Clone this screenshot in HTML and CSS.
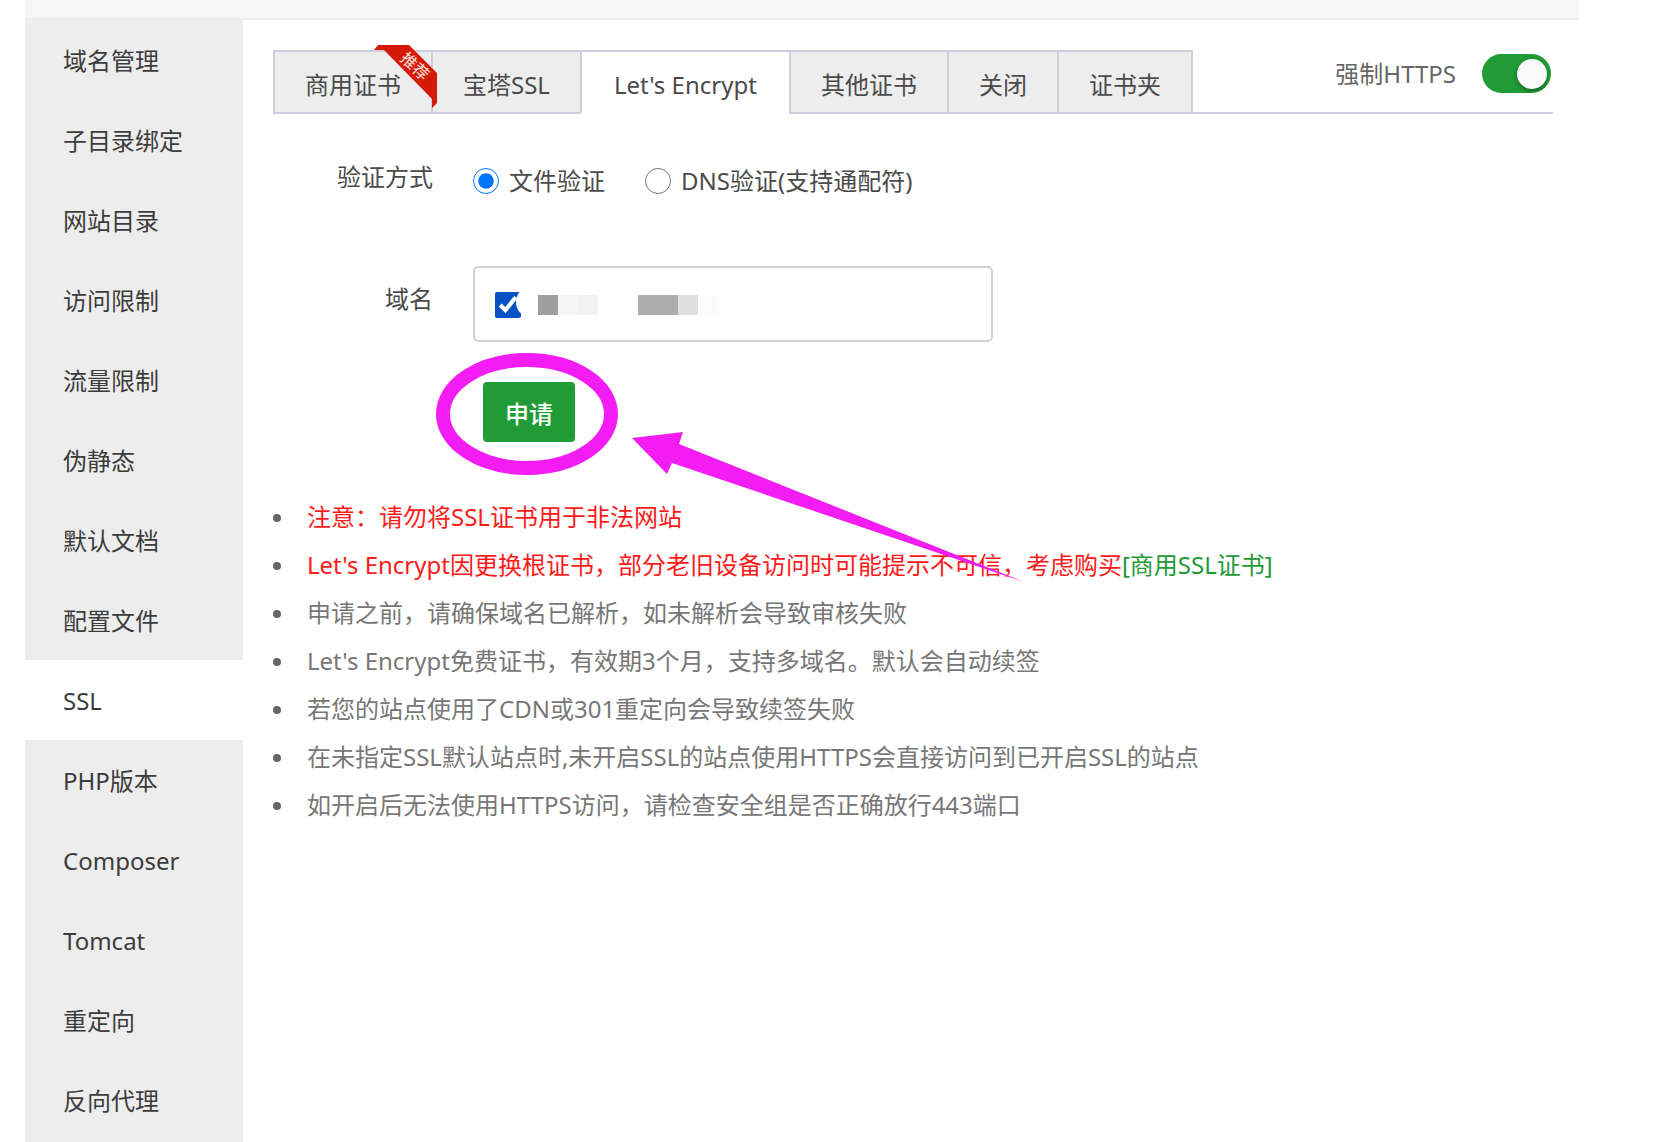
FILE: index.html
```html
<!DOCTYPE html>
<html lang="zh-CN">
<head>
<meta charset="utf-8">
<meta name="viewport" content="width=device-width, initial-scale=1">
<title>SSL</title>
<link rel="stylesheet" href="styles.css">
</head>
<body>
<div class="dialog">
  <header class="dialog-head"></header>
  <div class="dialog-body">
    <nav class="side">
      <a href="#">域名管理</a>
      <a href="#">子目录绑定</a>
      <a href="#">网站目录</a>
      <a href="#">访问限制</a>
      <a href="#">流量限制</a>
      <a href="#">伪静态</a>
      <a href="#">默认文档</a>
      <a href="#">配置文件</a>
      <a href="#" class="on" aria-current="page">SSL</a>
      <a href="#">PHP版本</a>
      <a href="#">Composer</a>
      <a href="#">Tomcat</a>
      <a href="#">重定向</a>
      <a href="#">反向代理</a>
    </nav>
    <main class="main">
      <div class="tab-row">
        <div class="tabs" role="tablist">
          <button class="tab" role="tab" type="button">商用证书
            <svg class="ribbon" width="64" height="65" viewBox="0 0 64 65">
              <path d="M1 6L5 1H36L64 29V59L59 64V55L11 6Z" fill="#d51a0a"/>
              <text x="42" y="22" transform="rotate(43 42 22)" text-anchor="middle" dominant-baseline="central">推荐</text>
            </svg>
          </button>
          <button class="tab" role="tab" type="button">宝塔SSL</button>
          <button class="tab active" role="tab" type="button" aria-selected="true">Let's Encrypt</button>
          <button class="tab" role="tab" type="button">其他证书</button>
          <button class="tab" role="tab" type="button">关闭</button>
          <button class="tab" role="tab" type="button">证书夹</button>
        </div>
        <label class="force">强制HTTPS<input class="switch" type="checkbox" role="switch" checked></label>
      </div>

      <form class="form">
        <div class="field" role="radiogroup" aria-labelledby="verify">
          <span class="field-name" id="verify">验证方式</span>
          <div class="options">
            <label class="option"><input type="radio" name="verify" checked>文件验证</label>
            <label class="option"><input type="radio" name="verify">DNS验证(支持通配符)</label>
          </div>
        </div>
        <div class="field domain">
          <label class="field-name" for="domain">域名</label>
          <div class="domain-box">
            <span class="check"><input type="checkbox" id="domain" checked></span>
            <span class="mosaic"><i class="m1"></i><i class="m2"></i><i class="m3"></i></span>
            <span class="mosaic"><i class="m4"></i><i class="m4"></i><i class="m5"></i><i class="m6"></i></span>
          </div>
        </div>
        <div class="action">
          <button class="apply" type="button">申请</button>
          <svg class="mark" width="590" height="234" viewBox="0 0 590 234">
            <ellipse cx="92" cy="63" rx="84" ry="54" fill="none" stroke="#f31df3" stroke-width="14"/>
            <path d="M197 87L248 81L244 93L589 231L237 112L232 123Z" fill="#f31df3"/>
          </svg>
        </div>
      </form>

      <ul class="notes">
        <li class="warn">注意：请勿将SSL证书用于非法网站</li>
        <li class="warn">Let's Encrypt因更换根证书，部分老旧设备访问时可能提示不可信，考虑购买<a href="#">[商用SSL证书]</a></li>
        <li>申请之前，请确保域名已解析，如未解析会导致审核失败</li>
        <li>Let's Encrypt免费证书，有效期3个月，支持多域名。默认会自动续签</li>
        <li>若您的站点使用了CDN或301重定向会导致续签失败</li>
        <li>在未指定SSL默认站点时,未开启SSL的站点使用HTTPS会直接访问到已开启SSL的站点</li>
        <li>如开启后无法使用HTTPS访问，请检查安全组是否正确放行443端口</li>
      </ul>
    </main>
  </div>
</div>
</body>
</html>
```
FILE: styles.css
```css
* { box-sizing: border-box; }

body {
  margin: 0;
  background: #fff;
  color: #4a4a4a;
  font: 24px/32px "Noto Sans", "Noto Sans CJK SC", sans-serif;
}

button, input { font: inherit; color: inherit; margin: 0; }
a { text-decoration: none; color: inherit; }

.dialog { margin: 0 95px 0 25px; }

.dialog-head {
  height: 20px;
  background: #f6f6f6;
  border-bottom: 2px solid #ededed;
}

.dialog-body { display: flex; min-height: calc(100vh - 20px); }

/* side menu */
.side { flex: none; width: 218px; background: #ededed; }
.side a {
  display: block;
  height: 80px;
  padding-left: 38px;
  line-height: 82px;
  color: #3c3c3c;
}
.side .on { background: #fff; }

.main { flex: 1; min-width: 0; padding: 30px 26px 0 30px; }

/* tabs */
.tab-row {
  display: flex;
  justify-content: space-between;
  height: 64px;
  border-bottom: 2px solid #d0cede;
}
.tabs { display: flex; height: 64px; border-right: 2px solid #d0cede; }
.tab {
  position: relative;
  padding: 6px 30px 0;
  border: solid #d0cede;
  border-width: 2px 0 2px 2px;
  background: #ededed;
  white-space: nowrap;
}
.tab.active { padding: 6px 32px 0; background: #fff; border-bottom-color: #fff; }

.ribbon { position: absolute; z-index: 1; top: -8px; right: -6px; }
.ribbon text { font-size: 16px; fill: #ffe3df; }

.force { display: flex; align-items: center; gap: 26px; height: 48px; padding-right: 2px; color: #666; }
.switch {
  appearance: none;
  width: 69px;
  height: 39px;
  margin-bottom: 2px;
  padding: 5px 4px;
  border-radius: 20px;
  background: #209b35;
}
.switch::before {
  content: "";
  display: block;
  width: 30px;
  height: 30px;
  margin-left: auto;
  border-radius: 50%;
  background: #fafafa;
  box-shadow: 0 2px 4px rgba(0, 0, 0, .35);
}

/* form */
.form { padding-top: 47px; }
.field { display: flex; gap: 40px; }
.field-name { flex: none; width: 160px; text-align: right; }
.options { display: flex; gap: 40px; padding-top: 4px; }
.option { display: flex; align-items: center; gap: 10px; }
.option input { width: 26px; height: 26px; }

.domain { margin-top: 69px; }
.domain .field-name { padding-top: 17px; }
.domain-box {
  display: flex;
  align-items: center;
  width: 520px;
  height: 76px;
  padding: 2px 0 0 20px;
  border: 2px solid #d2d2d2;
  border-radius: 5px;
}
.check { position: relative; display: flex; margin-right: 17px; }
.check input { width: 26px; height: 26px; accent-color: #0652c4; }
/* rounded nibble out of the right side of the tick box */
.check::after {
  content: "";
  position: absolute;
  left: 21px;
  top: -4px;
  width: 24px;
  height: 28px;
  border-radius: 50%;
  background: #fff;
}
.mosaic { position: relative; display: flex; margin-right: 40px; }
.mosaic i { width: 20px; height: 20px; }
.m1 { background: #9f9f9f; }
.m2 { background: #f5f5f5; }
.m3 { background: #f1f1f1; }
.m4 { background: #adadad; }
.m5 { background: #e0e0e0; }
.m6 { background: #fbfbfb; }

.action { position: relative; margin: 40px 0 0 210px; }
.apply {
  display: block;
  width: 92px;
  height: 60px;
  padding: 4px 0 0;
  border: 0;
  border-radius: 4px;
  background: #209b35;
  color: #fff;
  font-weight: 500;
}
.mark { position: absolute; left: -48px; top: -31px; pointer-events: none; }

/* notes */
.notes { margin: 51px 0 0; padding: 0; list-style: none; line-height: 48px; color: #777; }
.notes li::before {
  content: "";
  display: inline-block;
  width: 8px;
  height: 8px;
  margin: 0 26px 4px 0;
  border-radius: 50%;
  background: #666;
  vertical-align: middle;
}
.notes .warn { color: #ff1a1a; }
.notes a { color: #209b35; }
```
